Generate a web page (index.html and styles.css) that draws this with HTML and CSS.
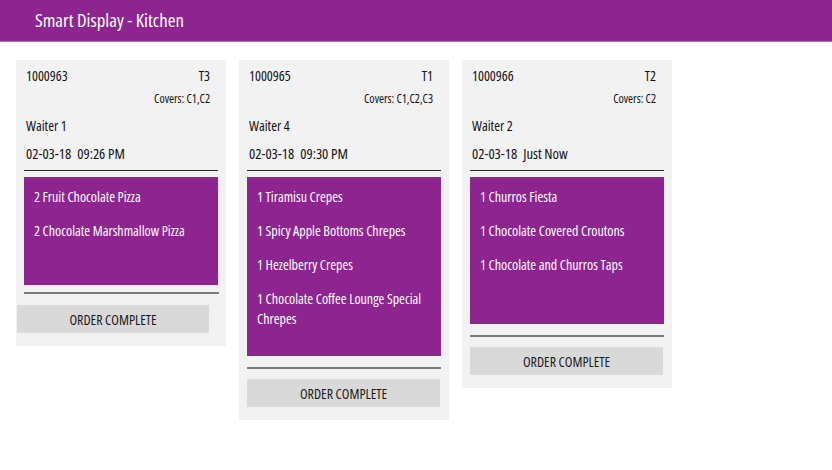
FILE: index.html
```html
<!DOCTYPE html>
<html lang="en">
<head>
<meta charset="utf-8">
<title>Smart Display - Kitchen</title>
<link rel="stylesheet" href="styles.css">
</head>
<body>
<header class="topbar">
  <h1 class="title">Smart Display - Kitchen</h1>
</header>
<main class="board">
  <section class="card card--first">
    <div class="meta">
      <div class="row"><span>1000963</span><span>T3</span></div>
      <div class="covers">Covers: C1,C2</div>
      <div class="waiter">Waiter 1</div>
      <div class="time"><span>02-03-18</span><span class="clock">09:26 PM</span></div>
    </div>
    <hr class="rule-top">
    <ul class="items items--a">
      <li>2 Fruit Chocolate Pizza</li>
      <li>2 Chocolate Marshmallow Pizza</li>
    </ul>
    <hr class="rule-bottom">
    <button class="complete">ORDER COMPLETE</button>
  </section>
  <section class="card">
    <div class="meta">
      <div class="row"><span>1000965</span><span>T1</span></div>
      <div class="covers">Covers: C1,C2,C3</div>
      <div class="waiter">Waiter 4</div>
      <div class="time"><span>02-03-18</span><span class="clock">09:30 PM</span></div>
    </div>
    <hr class="rule-top">
    <ul class="items items--b">
      <li>1 Tiramisu Crepes</li>
      <li>1 Spicy Apple Bottoms Chrepes</li>
      <li>1 Hezelberry Crepes</li>
      <li>1 Chocolate Coffee Lounge Special Chrepes</li>
    </ul>
    <hr class="rule-bottom">
    <button class="complete">ORDER COMPLETE</button>
  </section>
  <section class="card">
    <div class="meta">
      <div class="row"><span>1000966</span><span>T2</span></div>
      <div class="covers">Covers: C2</div>
      <div class="waiter">Waiter 2</div>
      <div class="time"><span>02-03-18</span><span class="clock">Just Now</span></div>
    </div>
    <hr class="rule-top">
    <ul class="items items--c">
      <li>1 Churros Fiesta</li>
      <li>1 Chocolate Covered Croutons</li>
      <li>1 Chocolate and Churros Taps</li>
    </ul>
    <hr class="rule-bottom">
    <button class="complete">ORDER COMPLETE</button>
  </section>
</main>
</body>
</html>
```
FILE: styles.css
```css
* { box-sizing: border-box; }
html, body { margin: 0; padding: 0; background: #ffffff; }
body {
  font-family: "Open Sans", "DejaVu Sans Condensed", sans-serif;
  font-stretch: 75%;
  color: #111111;
  width: 832px;
  height: 470px;
  overflow: hidden;
}
.topbar {
  height: 42px;
  background: #8e2490;
  border-bottom: 1px solid #b870b8;
  padding: 1px 0 0 35px;
}
.title {
  margin: 0;
  font-weight: normal;
  font-size: 18.8px;
  line-height: 39px;
  color: #ffffff;
}
.board {
  display: flex;
  align-items: flex-start;
  gap: 13px;
  padding: 18px 0 0 16px;
}
.card {
  width: 210px;
  background: #f2f2f2;
  padding: 8px 8px 13px 8px;
  display: flex;
  flex-direction: column;
}
.meta {
  padding: 0 8px 0 2px;
  font-size: 14px;
}
.row {
  display: flex;
  justify-content: space-between;
  line-height: 16px;
}
.covers {
  margin-top: 8px;
  text-align: right;
  font-size: 12px;
  line-height: 14px;
}
.waiter {
  margin-top: 12px;
  line-height: 16px;
}
.time {
  margin-top: 11px;
  line-height: 16px;
  font-size: 14.6px;
  display: flex;
  gap: 6px;
}
.rule-top {
  margin: 9px 0 0 0;
  border: 0;
  height: 1px;
  background: #2a2a2a;
}
.items {
  list-style: none;
  margin: 6px 0 0 0;
  padding: 10px 10px 0 10px;
  background: #8e2490;
  color: #ffffff;
  font-size: 14px;
  line-height: 20px;
}
.items li + li { margin-top: 14px; }
.items--a { height: 108px; }
.items--b { height: 179px; }
.items--c { height: 147px; }
.rule-bottom {
  margin: 11px 0 0 0;
  border: 0;
  height: 2px;
  background: #7a7a7a;
}
.card--first .rule-bottom { margin-top: 7px; width: 195px; }
.complete {
  margin-top: 10px;
  width: 193px;
  height: 28px;
  border: 0;
  background: #d9d9d9;
  font-family: inherit;
  font-stretch: inherit;
  font-size: 14px;
  color: #1a1a1a;
  padding: 0;
  text-align: center;
}
.card--first .complete { margin-left: -7px; width: 192px; margin-top: 11px; }
```
